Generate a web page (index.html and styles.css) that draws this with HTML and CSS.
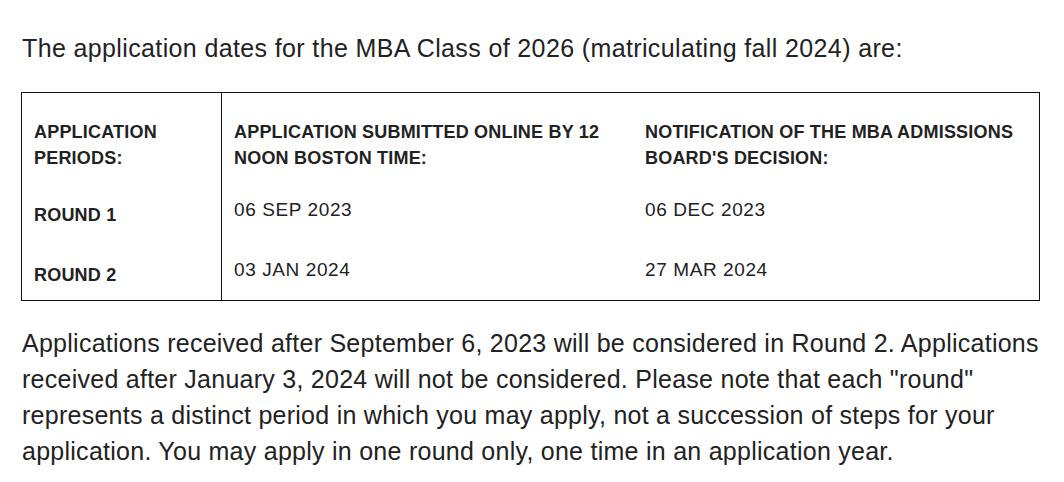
FILE: index.html
```html
<!DOCTYPE html>
<html lang="en">
<head>
    <meta charset="UTF-8">
    <meta name="viewport" content="width=device-width, initial-scale=1.0">
    <link rel="stylesheet" href="styles.css">
    <title>MBA Application Dates</title>
</head>

<body>
    <div class="content">
        <p class="intro">The application dates for the MBA Class of 2026 (matriculating fall 2024) are:</p>

        <table class="dates">
            <tr class="head">
                <th class="period">APPLICATION PERIODS:</th>
                <th class="submit">APPLICATION SUBMITTED ONLINE BY 12 NOON BOSTON TIME:</th>
                <th>NOTIFICATION OF THE MBA ADMISSIONS BOARD'S DECISION:</th>
            </tr>
            <tr>
                <th class="period">ROUND 1</th>
                <td class="submit">06 SEP 2023</td>
                <td>06 DEC 2023</td>
            </tr>
            <tr>
                <th class="period">ROUND 2</th>
                <td class="submit">03 JAN 2024</td>
                <td>27 MAR 2024</td>
            </tr>
        </table>

        <p class="note">Applications received after September 6, 2023 will be considered in Round 2. Applications received after January 3, 2024 will not be considered. Please note that each "round" represents a distinct period in which you may apply, not a succession of steps for your application. You may apply in one round only, one time in an application year.</p>
    </div>
</body>
</html>
```

FILE: styles.css
```css
body {
    margin: 0;
    background-color: #fff;
    color: #222;
    font-family: "Liberation Sans", Arial, sans-serif;
}
.content{
    padding: 30px 14px 0 22px;
}
.intro{
    margin: 0 0 26px 0;
    font-size: 25px;
    line-height: 36px;
    letter-spacing: 0.37px;
}
.dates{
    width: 1019px;
    margin-left: -1px;
    border: 1px solid #111;
    border-collapse: collapse;
}
.dates th,
.dates td{
    text-align: left;
    vertical-align: top;
    padding: 0 12px;
    line-height: 24px;
}
.dates th{
    font-size: 18px;
    font-weight: bold;
    letter-spacing: 0.2px;
    padding-top: 5px;
    padding-bottom: 31px;
}
.dates td{
    font-size: 19px;
    font-weight: normal;
    letter-spacing: 0.6px;
    padding-bottom: 36px;
}
.dates .period{
    width: 175px;
    border-right: 1px solid #111;
}
.dates .submit{
    width: 387px;
}
.dates .head th{
    padding-top: 26px;
    padding-bottom: 27px;
    line-height: 26px;
}
.dates tr:last-child th{
    padding-bottom: 13px;
}
.dates tr:last-child td{
    padding-bottom: 18px;
}
.note{
    margin: 24px 0 0 0;
    font-size: 25px;
    line-height: 36px;
    letter-spacing: 0.26px;
}
```
